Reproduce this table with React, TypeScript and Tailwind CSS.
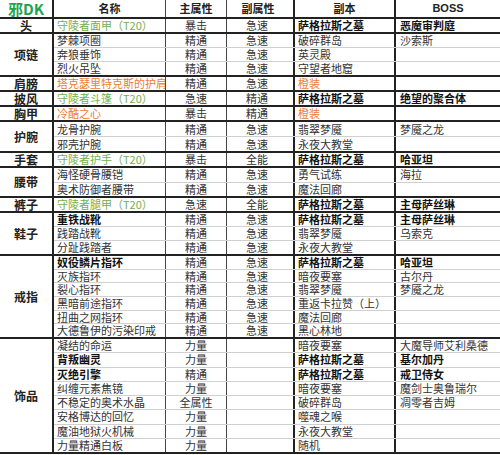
import React from "react";

type Tone = "green" | "orange" | "bold" | undefined;
type Item = {
  name: string;
  nt?: Tone;
  main: string;
  sub: string;
  dung: string;
  dt?: Tone;
  boss: string;
  bb?: boolean;
};
type Group = { label: string; h: string; items: Item[] };

const SGLS = "萨格拉斯之墓";

const groups: Group[] = [
  { label: "头", h: "h-[15px]", items: [{ name: "守陵者面甲（T20）", nt: "green", main: "暴击", sub: "急速", dung: SGLS, dt: "bold", boss: "恶魔审判庭", bb: true }] },
  {
    label: "项链",
    h: "h-[43px]",
    items: [
      { name: "梦棘项圈", main: "精通", sub: "急速", dung: "破碎群岛", boss: "沙索斯" },
      { name: "奔狼垂饰", main: "精通", sub: "急速", dung: "英灵殿", boss: "" },
      { name: "烈火吊坠", main: "精通", sub: "急速", dung: "守望者地窟", boss: "" },
    ],
  },
  { label: "肩膀", h: "h-[15px]", items: [{ name: "塔克瑟里特克斯的护肩", nt: "orange", main: "精通", sub: "急速", dung: "橙装", dt: "orange", boss: "" }] },
  { label: "披风", h: "h-[15px]", items: [{ name: "守陵者斗篷（T20）", nt: "green", main: "急速", sub: "精通", dung: SGLS, dt: "bold", boss: "绝望的聚合体", bb: true }] },
  { label: "胸甲", h: "h-[15px]", items: [{ name: "冷酷之心", nt: "orange", main: "暴击", sub: "精通", dung: "橙装", dt: "orange", boss: "" }] },
  {
    label: "护腕",
    h: "h-[31px]",
    items: [
      { name: "龙骨护腕", main: "精通", sub: "急速", dung: "翡翠梦魇", boss: "梦魇之龙" },
      { name: "邪壳护腕", main: "精通", sub: "急速", dung: "永夜大教堂", boss: "" },
    ],
  },
  { label: "手套", h: "h-[15px]", items: [{ name: "守陵者护手（T20）", nt: "green", main: "暴击", sub: "全能", dung: SGLS, dt: "bold", boss: "哈亚坦", bb: true }] },
  {
    label: "腰带",
    h: "h-[30px]",
    items: [
      { name: "海怪硬骨腰铠", main: "精通", sub: "急速", dung: "勇气试练", boss: "海拉" },
      { name: "奥术防御者腰带", main: "精通", sub: "急速", dung: "魔法回廊", boss: "" },
    ],
  },
  { label: "裤子", h: "h-[15px]", items: [{ name: "守陵者腿甲（T20）", nt: "green", main: "急速", sub: "全能", dung: SGLS, dt: "bold", boss: "主母萨丝琳", bb: true }] },
  {
    label: "鞋子",
    h: "h-[43px]",
    items: [
      { name: "重铁战靴", nt: "bold", main: "精通", sub: "急速", dung: SGLS, dt: "bold", boss: "主母萨丝琳", bb: true },
      { name: "践踏战靴", main: "精通", sub: "急速", dung: "翡翠梦魇", boss: "乌索克" },
      { name: "分趾践踏者", main: "精通", sub: "急速", dung: "永夜大教堂", boss: "" },
    ],
  },
  {
    label: "戒指",
    h: "h-[83px]",
    items: [
      { name: "奴役鳞片指环", nt: "bold", main: "精通", sub: "急速", dung: SGLS, dt: "bold", boss: "哈亚坦", bb: true },
      { name: "灭族指环", main: "精通", sub: "急速", dung: "暗夜要塞", boss: "古尔丹" },
      { name: "裂心指环", main: "精通", sub: "急速", dung: "翡翠梦魇", boss: "梦魇之龙" },
      { name: "黑暗前途指环", main: "精通", sub: "急速", dung: "重返卡拉赞（上）", boss: "" },
      { name: "扭曲之网指环", main: "精通", sub: "急速", dung: "魔法回廊", boss: "" },
      { name: "大德鲁伊的污染印戒", main: "精通", sub: "急速", dung: "黑心林地", boss: "" },
    ],
  },
  {
    label: "饰品",
    h: "h-[115px]",
    items: [
      { name: "凝结的命运", main: "力量", sub: "", dung: "暗夜要塞", boss: "大魔导师艾利桑德" },
      { name: "背叛幽灵", nt: "bold", main: "力量", sub: "", dung: SGLS, dt: "bold", boss: "基尔加丹", bb: true },
      { name: "灭绝引擎", nt: "bold", main: "精通", sub: "", dung: SGLS, dt: "bold", boss: "戒卫侍女", bb: true },
      { name: "纠缠元素焦镜", main: "力量", sub: "", dung: "暗夜要塞", boss: "魔剑士奥鲁瑞尔" },
      { name: "不稳定的奥术水晶", main: "全属性", sub: "", dung: "破碎群岛", boss: "凋零者吉姆" },
      { name: "安格博达的回忆", main: "力量", sub: "", dung: "噬魂之喉", boss: "" },
      { name: "魔油地狱火机械", main: "力量", sub: "", dung: "永夜大教堂", boss: "" },
      { name: "力量精通白板", main: "力量", sub: "", dung: "随机", boss: "" },
    ],
  },
];

function toneClass(t: Tone) {
  if (t === "green") return "text-[#72b04e]";
  if (t === "orange") return "text-[#ee7b32]";
  if (t === "bold") return "font-bold text-[#111]";
  return "text-[#333]";
}

function Row({ it, last }: { it: Item; last: boolean }) {
  return (
    <div className={`flex flex-1 min-h-0 ${last ? "" : "border-b border-[#d0d0d0]"}`}>
      <div className={`w-[112px] shrink-0 flex items-center pl-[3px] border-r border-[#444] whitespace-nowrap overflow-hidden ${toneClass(it.nt)}`}>
        {it.name}
      </div>
      <div className="w-[61px] shrink-0 flex items-center justify-center border-r border-[#444] text-[#333]">{it.main}</div>
      <div className="w-[68px] shrink-0 flex items-center justify-center pr-[6px] border-r-2 border-[#222] text-[#333]">{it.sub}</div>
      <div className={`w-[101px] shrink-0 flex items-center pl-[3px] border-r-2 border-[#222] whitespace-nowrap ${toneClass(it.dt)}`}>
        {it.dung}
      </div>
      <div className={`flex-1 flex items-center pl-[4px] whitespace-nowrap ${it.bb ? "font-bold text-[#111]" : "text-[#333]"}`}>{it.boss}</div>
    </div>
  );
}

export default function App() {
  return (
    <div
      className="w-[500px] h-[455px] bg-white overflow-hidden text-[11px] leading-none"
      style={{ fontFamily: '"Noto Sans CJK SC", "Liberation Sans", sans-serif' }}
    >
      <div className="flex h-[19px] border-b-2 border-[#222]">
        <div className="w-[54px] shrink-0 flex items-center justify-center border-r-2 border-[#222] text-[15px] font-bold text-[#1fa34f]">
          邪DK
        </div>
        <div className="w-[112px] shrink-0 flex items-center justify-center border-r border-[#444] font-bold text-[#222]">名称</div>
        <div className="w-[61px] shrink-0 flex items-center justify-center border-r border-[#444] font-bold text-[#222]">主属性</div>
        <div className="w-[68px] shrink-0 flex items-center justify-center pr-[4px] border-r-2 border-[#222] font-bold text-[#222]">副属性</div>
        <div className="w-[101px] shrink-0 flex items-center justify-center border-r-2 border-[#222] font-bold text-[#222]">副本</div>
        <div className="flex-1 flex items-center justify-center font-bold text-[#222]" style={{ fontFamily: '"Liberation Sans", sans-serif' }}>
          BOSS
        </div>
      </div>
      {groups.map((g) => (
        <div key={g.label} className={`flex ${g.h} border-b-2 border-[#222]`}>
          <div className="w-[54px] shrink-0 flex items-center justify-center border-r-2 border-[#222] text-[12px] font-bold text-[#222]">
            {g.label}
          </div>
          <div className="flex-1 flex flex-col">
            {g.items.map((it, i) => (
              <Row key={i} it={it} last={i === g.items.length - 1} />
            ))}
          </div>
        </div>
      ))}
    </div>
  );
}
